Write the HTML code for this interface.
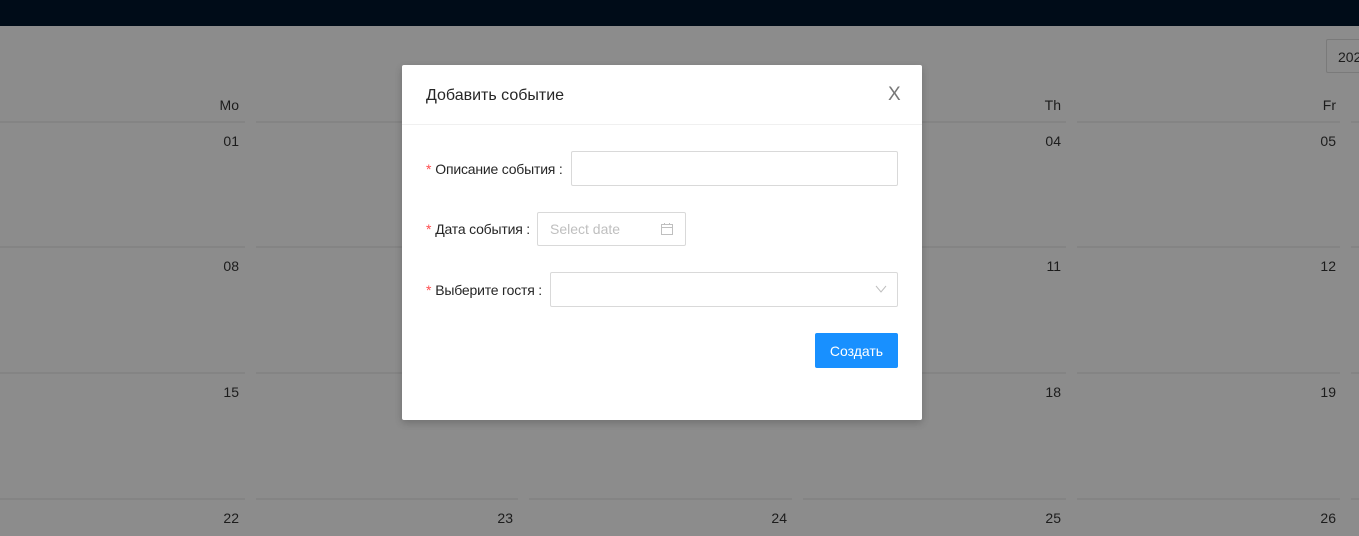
<!DOCTYPE html>
<html><head><meta charset="utf-8"><style>
*{box-sizing:border-box;margin:0;padding:0}
body{width:1359px;height:536px;overflow:hidden;background:#8c8c8c;font-family:"Liberation Sans",sans-serif;font-size:14px;color:#1a1a1a;position:relative}
.top{position:absolute;left:0;top:0;width:1359px;height:26px;background:#000c18}
.a{position:absolute}
.line{position:absolute;height:2px;background:#848484}
.d{position:absolute;font-size:14px;color:#1c1c1c;text-align:right;width:40px}
.modal{position:absolute;left:402px;top:65px;width:520px;height:355px;background:#fff;border-radius:2px;box-shadow:0 3px 8px rgba(0,0,0,.2)}
.lbl{position:absolute;font-size:14px;color:#262626;letter-spacing:-0.2px}
.lbl b{color:#ff4d4f;font-weight:normal;margin-right:4px}
.inp{position:absolute;border:1px solid #d9d9d9;border-radius:2px;background:#fff}
</style></head><body>
<div class="top"></div>
<div class="a" style="left:1326px;top:39px;width:40px;height:34px;border:1px solid #7a7a7a;border-radius:2px;font-size:14px;color:#1c1c1c;padding:9px 0 0 11px">202</div>
<div class="d" style="left:199px;top:97px">Mo</div>
<div class="d" style="left:1021px;top:97px">Th</div>
<div class="d" style="left:1296px;top:97px">Fr</div>
<div class="line" style="left:0;top:121px;width:245px"></div><div class="line" style="left:256px;top:121px;width:262px"></div><div class="line" style="left:529px;top:121px;width:263px"></div><div class="line" style="left:803px;top:121px;width:263px"></div><div class="line" style="left:1077px;top:121px;width:263px"></div><div class="line" style="left:1351px;top:121px;width:10px"></div>
<div class="line" style="left:0;top:246px;width:245px"></div><div class="line" style="left:256px;top:246px;width:262px"></div><div class="line" style="left:529px;top:246px;width:263px"></div><div class="line" style="left:803px;top:246px;width:263px"></div><div class="line" style="left:1077px;top:246px;width:263px"></div><div class="line" style="left:1351px;top:246px;width:10px"></div>
<div class="line" style="left:0;top:372px;width:245px"></div><div class="line" style="left:256px;top:372px;width:262px"></div><div class="line" style="left:529px;top:372px;width:263px"></div><div class="line" style="left:803px;top:372px;width:263px"></div><div class="line" style="left:1077px;top:372px;width:263px"></div><div class="line" style="left:1351px;top:372px;width:10px"></div>
<div class="line" style="left:0;top:498px;width:245px"></div><div class="line" style="left:256px;top:498px;width:262px"></div><div class="line" style="left:529px;top:498px;width:263px"></div><div class="line" style="left:803px;top:498px;width:263px"></div><div class="line" style="left:1077px;top:498px;width:263px"></div><div class="line" style="left:1351px;top:498px;width:10px"></div>
<div class="d" style="left:199px;top:133px">01</div><div class="d" style="left:1021px;top:133px">04</div><div class="d" style="left:1296px;top:133px">05</div>
<div class="d" style="left:199px;top:258px">08</div><div class="d" style="left:1021px;top:258px">11</div><div class="d" style="left:1296px;top:258px">12</div>
<div class="d" style="left:199px;top:384px">15</div><div class="d" style="left:1021px;top:384px">18</div><div class="d" style="left:1296px;top:384px">19</div>
<div class="d" style="left:199px;top:510px">22</div><div class="d" style="left:473px;top:510px">23</div><div class="d" style="left:747px;top:510px">24</div><div class="d" style="left:1021px;top:510px">25</div><div class="d" style="left:1296px;top:510px">26</div>
<div class="modal">
 <div class="a" style="left:24px;top:22px;font-size:16px;color:#262626">Добавить событие</div>
 <div class="a" style="left:486px;top:19px;font-size:19px;color:#777">X</div>
 <div class="a" style="left:0;top:59px;width:520px;height:1px;background:#f0f0f0"></div>
 <div class="lbl" style="left:24px;top:96px"><b>*</b>Описание события :</div>
 <div class="inp" style="left:169px;top:86px;width:327px;height:35px"></div>
 <div class="lbl" style="left:24px;top:156px"><b>*</b>Дата события :</div>
 <div class="inp" style="left:135px;top:147px;width:149px;height:34px"><span style="position:absolute;left:12px;top:8px;color:#bfbfbf">Select date</span>
  <svg style="position:absolute;left:122px;top:9px" width="14" height="14" viewBox="0 0 14 14"><rect x="1.5" y="2.5" width="11" height="10" fill="none" stroke="#bfbfbf"/><line x1="1.5" y1="5.5" x2="12.5" y2="5.5" stroke="#bfbfbf"/><line x1="4.5" y1="1" x2="4.5" y2="3" stroke="#bfbfbf"/><line x1="9.5" y1="1" x2="9.5" y2="3" stroke="#bfbfbf"/></svg></div>
 <div class="lbl" style="left:24px;top:217px"><b>*</b>Выберите гостя :</div>
 <div class="inp" style="left:148px;top:207px;width:348px;height:35px">
  <svg style="position:absolute;left:324px;top:12px" width="12" height="8" viewBox="0 0 12 8"><path d="M1 1l5 6 5-6" fill="none" stroke="#bfbfbf"/></svg></div>
 <div class="a" style="left:413px;top:268px;width:83px;height:35px;background:#1890ff;border-radius:2px;color:#fff;text-align:center;line-height:36px">Создать</div>
</div>
</body></html>
